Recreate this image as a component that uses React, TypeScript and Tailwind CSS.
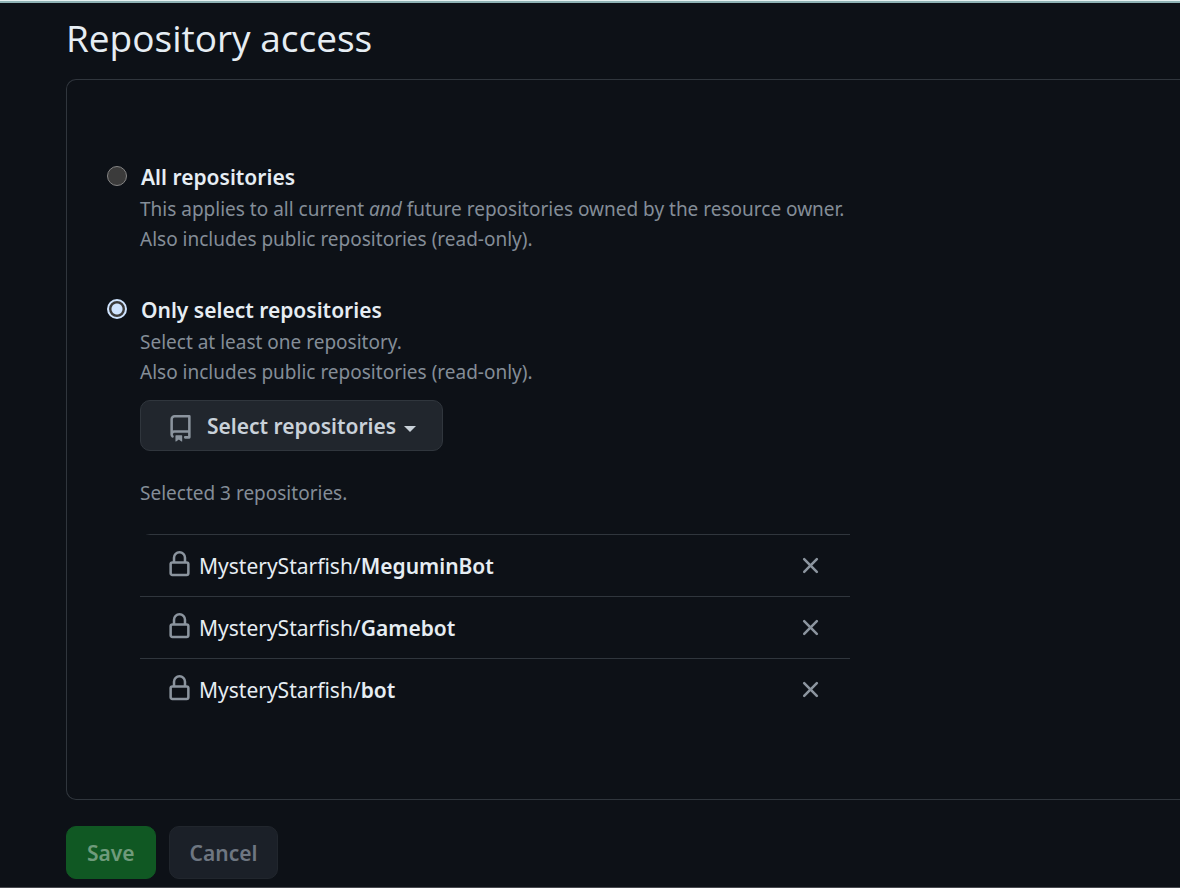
import { useState } from "react";

const LOCK =
  "M4 4v2h-.25A1.75 1.75 0 002 7.75v5.5c0 .966.784 1.75 1.75 1.75h8.5A1.75 1.75 0 0014 13.25v-5.5A1.75 1.75 0 0012.25 6H12V4a4 4 0 10-8 0zm6.5 2V4a2.5 2.5 0 00-5 0v2h5zM12 7.5h.25a.25.25 0 01.25.25v5.5a.25.25 0 01-.25.25h-8.5a.25.25 0 01-.25-.25v-5.5a.25.25 0 01.25-.25H12z";
const REPO =
  "M2 2.5A2.5 2.5 0 014.5 0h8.75a.75.75 0 01.75.75v12.5a.75.75 0 01-.75.75h-2.5a.75.75 0 110-1.5h1.75v-2h-8a1 1 0 00-.714 1.7.75.75 0 01-1.072 1.05A2.495 2.495 0 012 11.5v-9zm10.5-1V9h-8c-.356 0-.694.074-1 .208V2.5a1 1 0 011-1h8zM5 12.25v3.25a.25.25 0 00.4.2l1.45-1.087a.25.25 0 01.3 0L8.6 15.7a.25.25 0 00.4-.2v-3.25a.25.25 0 00-.25-.25h-3.5a.25.25 0 00-.25.25z";
const CROSS =
  "M3.72 3.72a.75.75 0 011.06 0L8 6.94l3.22-3.22a.75.75 0 111.06 1.06L9.06 8l3.22 3.22a.75.75 0 11-1.06 1.06L8 9.06l-3.22 3.22a.75.75 0 01-1.06-1.06L6.94 8 3.72 4.78a.75.75 0 010-1.06z";

function Icon({ path, className }: { path: string; className?: string }) {
  return (
    <svg
      viewBox="0 0 16 16"
      aria-hidden="true"
      className={`size-[27px] shrink-0 fill-[#8b949e] ${className ?? ""}`}
    >
      <path fillRule="evenodd" d={path} />
    </svg>
  );
}

type RadioProps = { id: string; checked: boolean; onSelect: () => void };

function Radio({ id, checked, onSelect }: RadioProps) {
  return (
    <input
      type="radio"
      name="access"
      id={id}
      checked={checked}
      onChange={onSelect}
      className="mt-1.5 size-5 shrink-0 appearance-none rounded-full border border-[#858585] bg-[#3b3b3b] checked:border-2 checked:border-[#cfe4ff] checked:bg-[radial-gradient(circle,#cfe4ff_5px,#3b3b3b_6px)]"
    />
  );
}

export default function App() {
  const [access, setAccess] = useState("select");
  const [repos, setRepos] = useState(["MeguminBot", "Gamebot", "bot"]);

  return (
    <main className="min-h-screen border-t border-b border-t-[#e6f1f1] border-b-[#484a4f] bg-[#0d1117] font-['Noto_Sans',sans-serif] text-[#e6edf3]">
      <div className="border-t-2 border-[#8fb3b5] pl-[66px]">
        <h1 className="pt-[7px] font-['Open_Sans',sans-serif] text-[37px] leading-[56px]">Repository access</h1>
        <fieldset className="mt-[13px] rounded-l-[10px] border border-r-0 border-[#30363d] pt-20 pb-[79px] pl-10">
          <div className="flex gap-[13px]">
            <Radio id="all" checked={access === "all"} onSelect={() => setAccess("all")} />
            <div>
              <label htmlFor="all" className="block pl-px text-[21px] leading-[34px] font-semibold">
                All repositories
              </label>
              <p className="text-[19px] leading-[30px] text-[#848d97]">
                This applies to all current <em>and</em> future repositories owned by the resource owner.
                <br />
                Also includes public repositories (read-only).
              </p>
            </div>
          </div>

          <div className="mt-[39px] flex gap-[13px]">
            <Radio id="select" checked={access === "select"} onSelect={() => setAccess("select")} />
            <div className="w-full max-w-[710px]">
              <label htmlFor="select" className="block pl-px text-[21px] leading-[34px] font-semibold">
                Only select repositories
              </label>
              <p className="text-[19px] leading-[30px] text-[#848d97]">
                Select at least one repository.
                <br />
                Also includes public repositories (read-only).
              </p>
              <button
                type="button"
                className="mt-[13px] flex items-center rounded-[10px] border border-[#30363d] bg-[#21262d] pt-[9px] pb-[7px] pr-[26px] pl-[26px] text-[21px] leading-[33px] font-semibold text-[#c9d1d9]"
              >
                <Icon path={REPO} className="mt-[3px] mr-[13px]" />
                Select repositories
                <span className="mt-1 ml-2 border-x-6 border-t-6 border-x-transparent border-t-[#c9d1d9]" />
              </button>
              <p className="mt-[27px] text-[19px] leading-[30px] text-[#848d97]">
                Selected {repos.length} repositories.
              </p>
              <ul className="mt-[26px] overflow-hidden rounded-tl-[10px]">
                {repos.map((repo) => (
                  <li
                    key={repo}
                    className="flex h-[62px] items-center border-t border-[#30363d] px-[26px] text-[21px]"
                  >
                    <Icon path={LOCK} className="mr-1.5 mb-0.5" />
                    <span className="pt-0.5">
                      MysteryStarfish/<b className="font-semibold">{repo}</b>
                    </span>
                    <button
                      type="button"
                      aria-label={`Remove ${repo}`}
                      className="ml-auto"
                      onClick={() => setRepos(repos.filter((r) => r !== repo))}
                    >
                      <Icon path={CROSS} />
                    </button>
                  </li>
                ))}
              </ul>
            </div>
          </div>
        </fieldset>
        <div className="flex gap-[13px] pt-[26px] pb-2 text-[21px] leading-[33px] font-semibold">
          <button type="button" className="rounded-[10px] border border-[#105823] bg-[#105823] px-5 pt-[10px] pb-2 text-[#6f9b7b]">
            Save
          </button>
          <button type="button" className="rounded-[10px] border border-[#21262d] bg-[#1b2028] px-5 pt-[10px] pb-2 text-[#6e7681]">
            Cancel
          </button>
        </div>
      </div>
    </main>
  );
}
